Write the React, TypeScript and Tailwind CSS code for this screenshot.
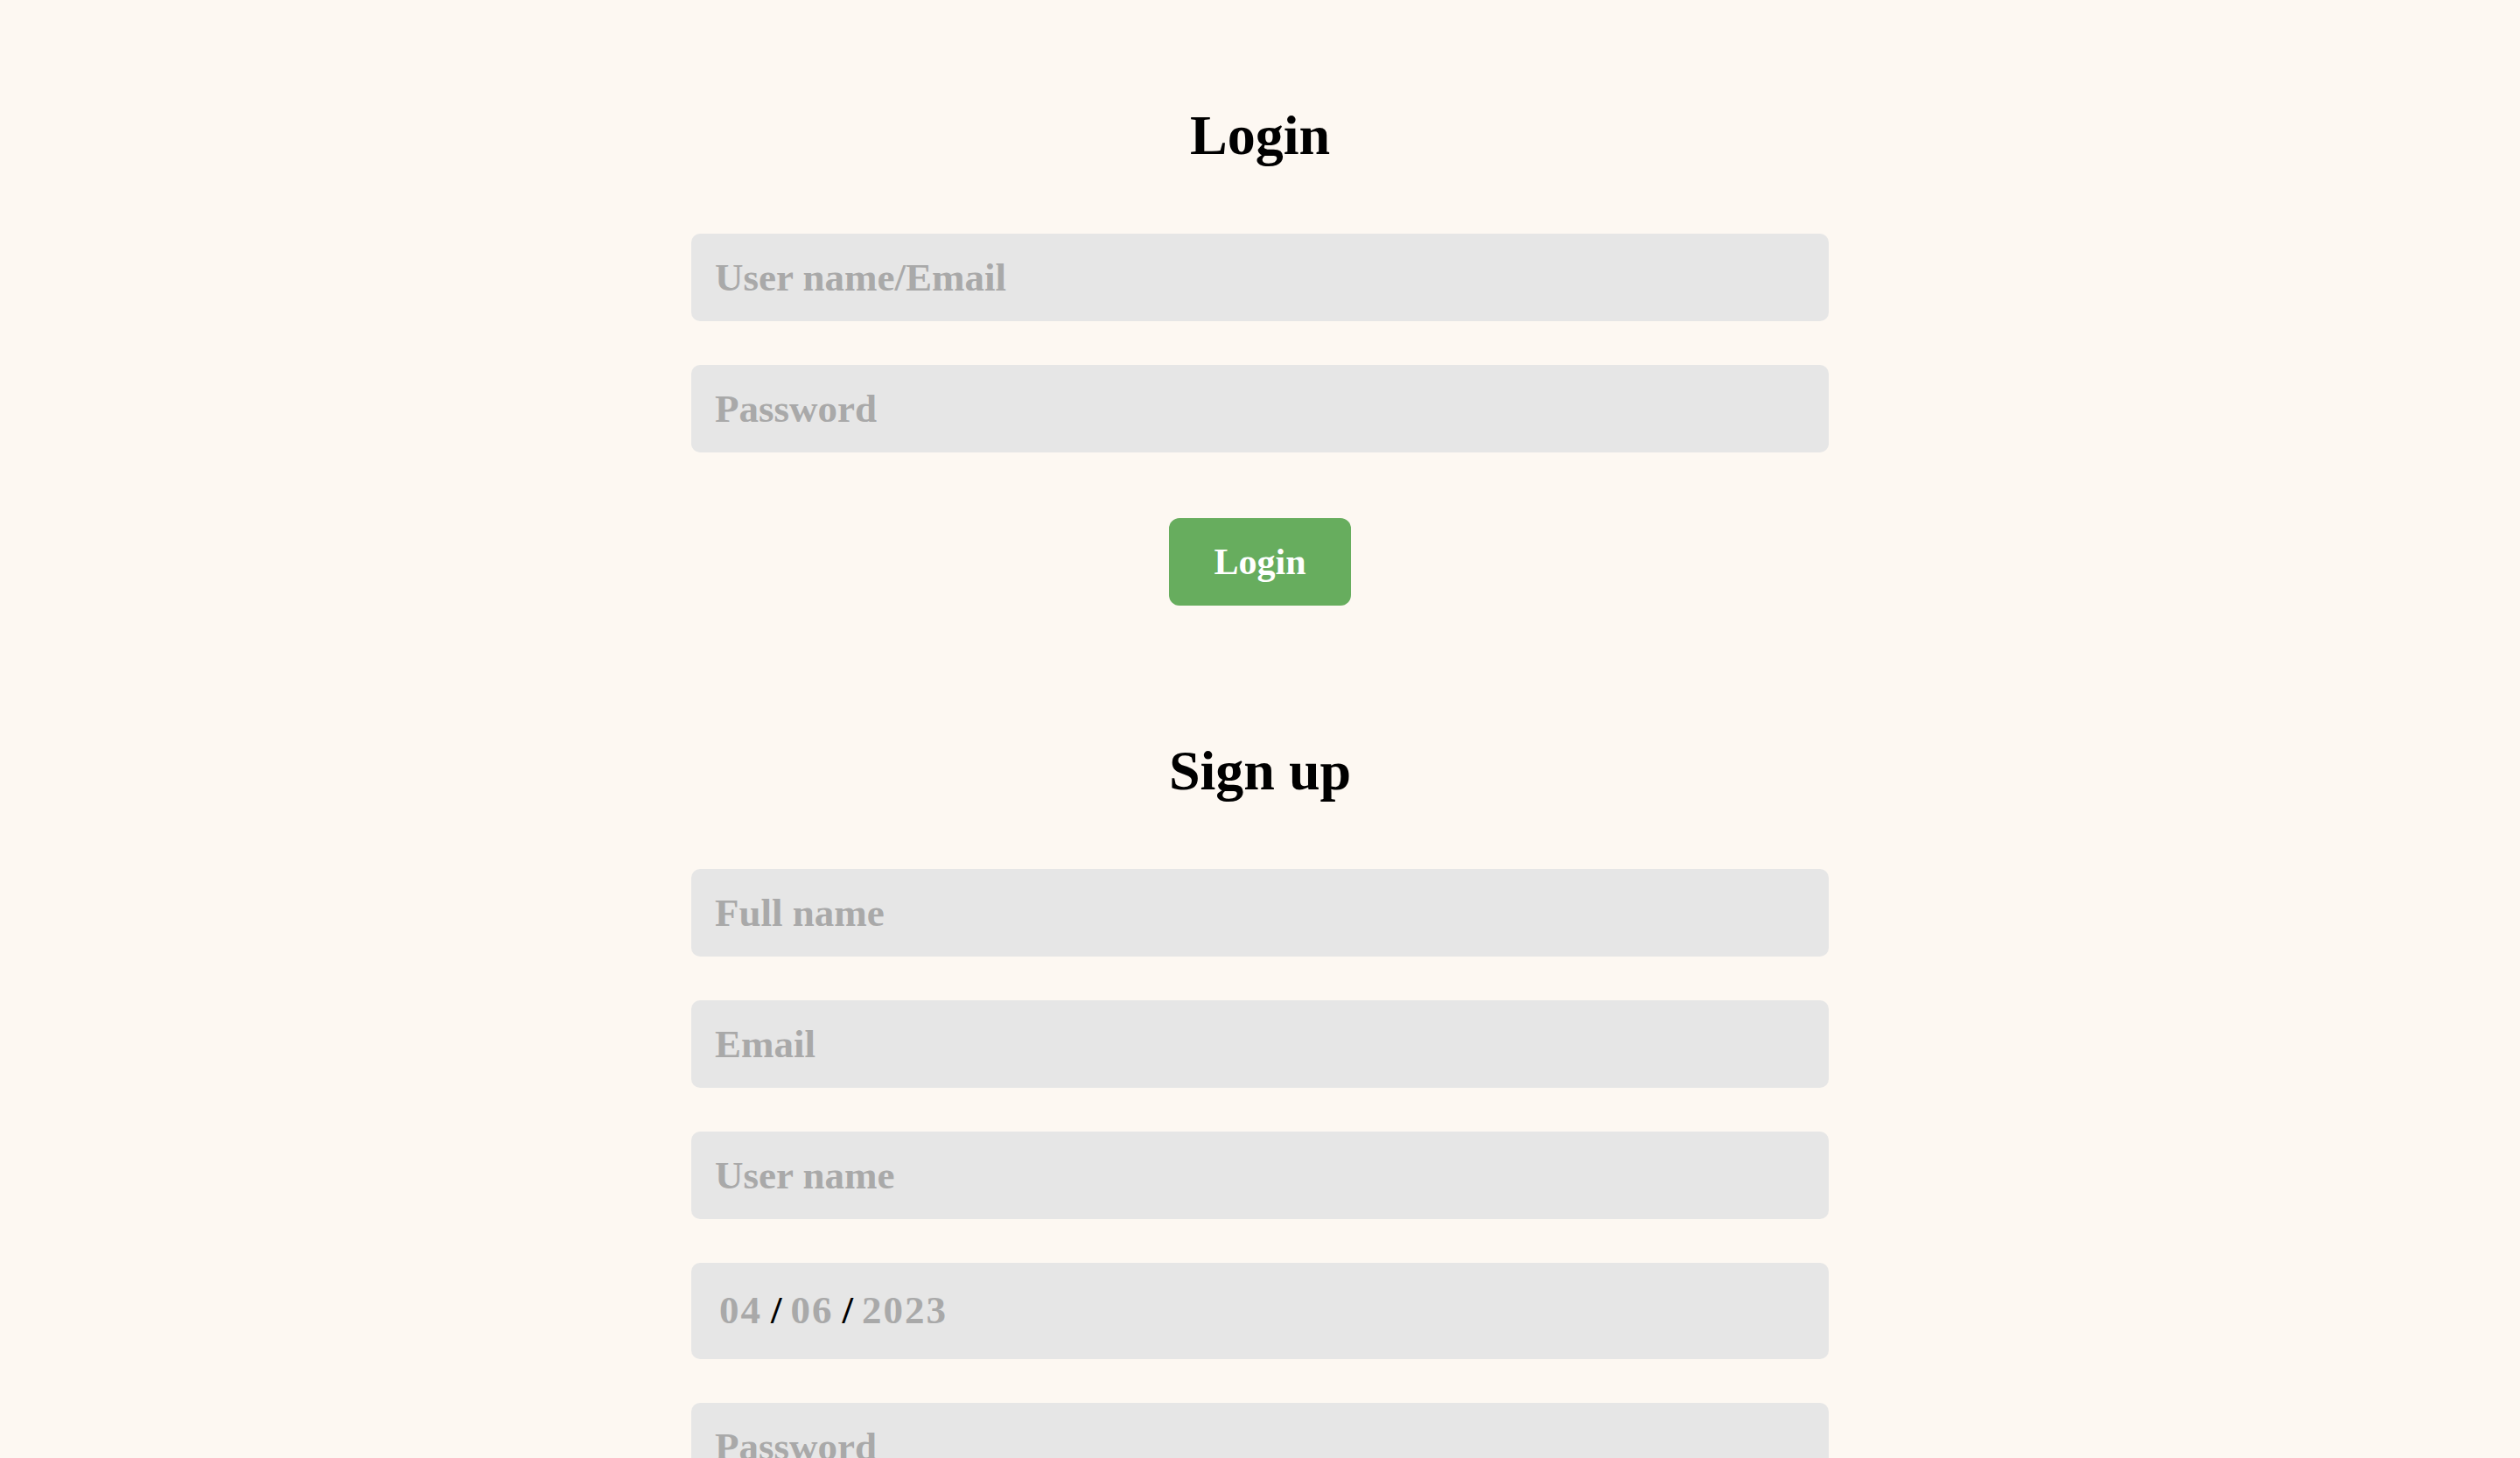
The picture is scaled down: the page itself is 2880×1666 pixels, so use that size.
import React from 'react';

const fieldClass =
  "block w-full h-[100px] rounded-[10px] bg-[#e6e6e6] pl-[27px] pr-[27px] text-[45px] font-bold text-black outline-none placeholder:text-[#a9a9a9] font-['Liberation_Serif',serif]";

const Field: React.FC<{ placeholder: string; type?: string }> = ({ placeholder, type = 'text' }) => (
  <input type={type} placeholder={placeholder} className={fieldClass} />
);

const DateField: React.FC = () => (
  <div className="flex h-[110px] w-full items-center rounded-[10px] bg-[#e6e6e6] pl-[32px] text-[45px] font-bold font-['Liberation_Serif',serif]">
    <span className="tracking-[2px] text-[#a9a9a9]">04</span>
    <span className="mx-[10px] text-black">/</span>
    <span className="tracking-[2px] text-[#a9a9a9]">06</span>
    <span className="mx-[10px] text-black">/</span>
    <span className="tracking-[2px] text-[#a9a9a9]">2023</span>
  </div>
);

export default function App() {
  return (
    <div className="min-h-screen w-full bg-[#fdf8f2] pt-[116px] pb-[120px] font-['Liberation_Serif',serif] text-black">
      <div className="mx-auto flex w-[1300px] flex-col">
        {/* Login */}
        <h1 className="text-center text-[64px] font-bold leading-[77px]">Login</h1>
        <div className="mt-[74px] flex flex-col gap-[50px]">
          <Field placeholder="User name/Email" />
          <Field placeholder="Password" type="password" />
        </div>
        <button className="mx-auto mt-[75px] h-[100px] w-[208px] rounded-[12px] bg-[#67ad5e] text-[42px] font-bold text-white">
          Login
        </button>

        {/* Sign up */}
        <h1 className="mt-[150px] text-center text-[64px] font-bold leading-[77px]">Sign up</h1>
        <div className="mt-[74px] flex flex-col gap-[50px]">
          <Field placeholder="Full name" />
          <Field placeholder="Email" type="email" />
          <Field placeholder="User name" />
          <DateField />
          <Field placeholder="Password" type="password" />
        </div>
        <button className="mx-auto mt-[75px] h-[100px] w-[240px] rounded-[12px] bg-[#67ad5e] text-[42px] font-bold text-white">
          Sign up
        </button>
      </div>
    </div>
  );
}
